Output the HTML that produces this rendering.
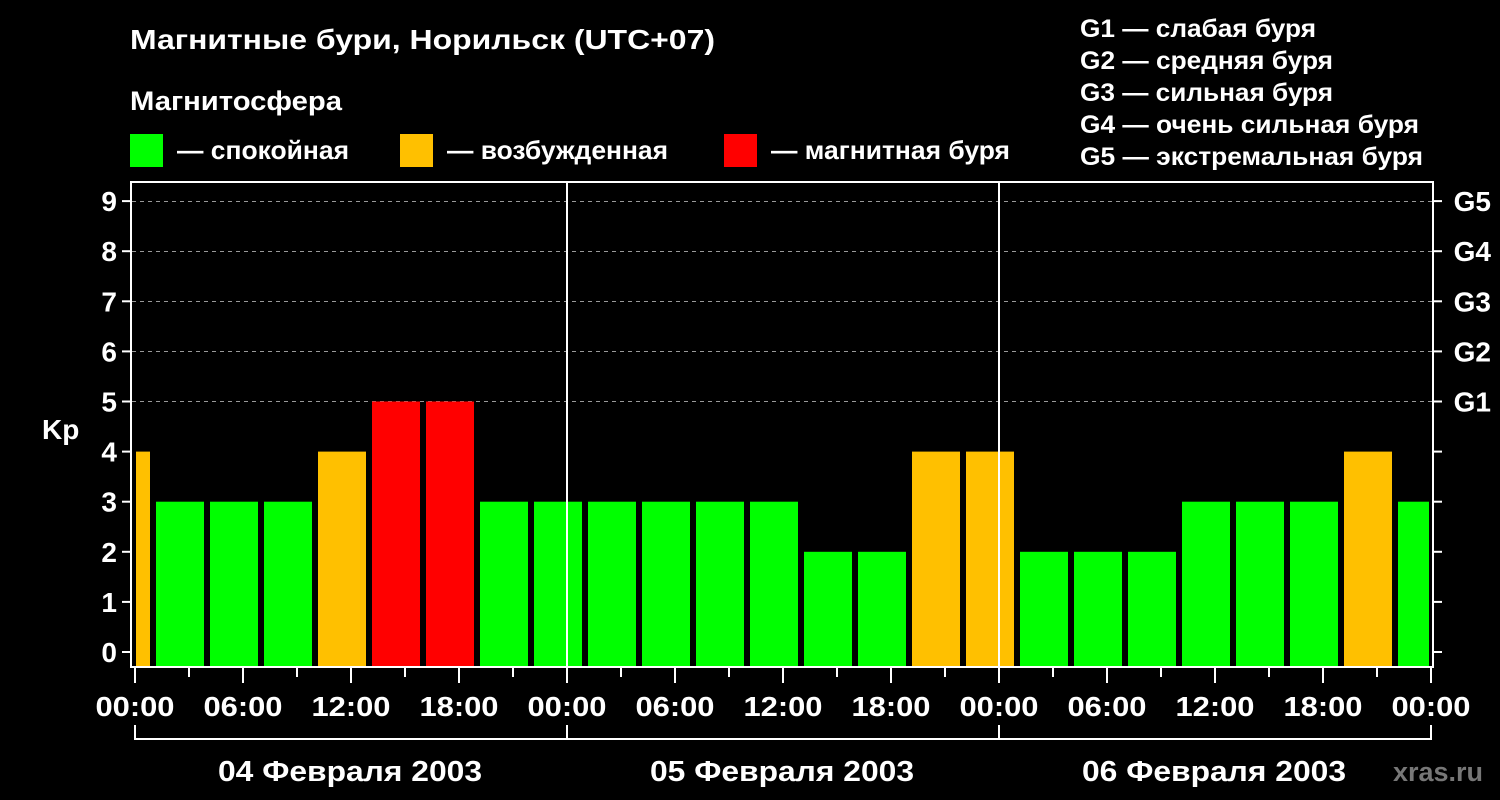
<!DOCTYPE html><html><head><meta charset="utf-8"><style>body{margin:0;background:#000}svg{display:block}text{font-family:"Liberation Sans",sans-serif;font-weight:bold;fill:#fff}</style></head><body>
<svg width="1500" height="800" viewBox="0 0 1500 800">
<rect width="1500" height="800" fill="#000"/>
<text x="130" y="49" font-size="28" textLength="585" lengthAdjust="spacingAndGlyphs">Магнитные бури, Норильск (UTC+07)</text>
<text x="130" y="110" font-size="27" textLength="212" lengthAdjust="spacingAndGlyphs">Магнитосфера</text>
<rect x="130" y="134" width="33" height="33" fill="#00ff00"/><text x="177" y="159" font-size="26" textLength="172" lengthAdjust="spacingAndGlyphs">— спокойная</text>
<rect x="400" y="134" width="33" height="33" fill="#ffc000"/><text x="447" y="159" font-size="26" textLength="221" lengthAdjust="spacingAndGlyphs">— возбужденная</text>
<rect x="724" y="134" width="33" height="33" fill="#ff0000"/><text x="771" y="159" font-size="26" textLength="239" lengthAdjust="spacingAndGlyphs">— магнитная буря</text>
<g font-size="25" lengthAdjust="spacingAndGlyphs"><text x="1080" y="37" textLength="236" lengthAdjust="spacingAndGlyphs">G1 — слабая буря</text><text x="1080" y="69" textLength="253" lengthAdjust="spacingAndGlyphs">G2 — средняя буря</text><text x="1080" y="101" textLength="253" lengthAdjust="spacingAndGlyphs">G3 — сильная буря</text><text x="1080" y="133" textLength="339" lengthAdjust="spacingAndGlyphs">G4 — очень сильная буря</text><text x="1080" y="165" textLength="343" lengthAdjust="spacingAndGlyphs">G5 — экстремальная буря</text></g>
<g stroke="#999" stroke-dasharray="4,4" stroke-width="1">
<line x1="132" y1="201.5" x2="1432" y2="201.5"/><line x1="132" y1="251.5" x2="1432" y2="251.5"/><line x1="132" y1="301.5" x2="1432" y2="301.5"/><line x1="132" y1="351.5" x2="1432" y2="351.5"/><line x1="132" y1="401.5" x2="1432" y2="401.5"/></g>
<g id="bars"></g>
<g stroke="#fff" stroke-width="2" fill="none">
<rect x="131" y="182" width="1302" height="485"/>
<line x1="567" y1="182" x2="567" y2="667"/><line x1="999" y1="182" x2="999" y2="667"/>
<path d="M135 725V739H1431V725M567 725V739M999 725V739"/>
</g>
<g stroke="#fff" stroke-width="2" id="ticks"></g>
<g font-size="28" text-anchor="end" id="yl"></g>
<text x="42" y="439" font-size="28">Kp</text>
<g font-size="28" text-anchor="middle" id="xl"></g>
<g font-size="29" text-anchor="middle"><text x="350" y="781" textLength="264" lengthAdjust="spacingAndGlyphs">04 Февраля 2003</text><text x="782" y="781" textLength="264" lengthAdjust="spacingAndGlyphs">05 Февраля 2003</text><text x="1214" y="781" textLength="264" lengthAdjust="spacingAndGlyphs">06 Февраля 2003</text></g>
<text x="1393" y="781" font-size="27" style="fill:#777" textLength="90" lengthAdjust="spacingAndGlyphs">xras.ru</text>
</svg>
<script>
var ns="http://www.w3.org/2000/svg",v=[4,3,3,3,4,5,5,3,3,3,3,3,3,2,2,4,4,2,2,2,3,3,3,4,3];
function el(p,t,a,tx){var e=document.createElementNS(ns,t);for(var k in a)e.setAttribute(k,a[k]);if(tx)e.textContent=tx;document.getElementById(p).appendChild(e);}
v.forEach(function(k,i){var x=102+54*i,x2=x+48;x=Math.max(x,136);x2=Math.min(x2,1429);var y=652-50.1*k;
el("bars","rect",{x:x,y:y,width:x2-x,height:667-y,fill:k>=5?"#ff0000":k>=4?"#ffc000":"#00ff00"});});
for(var k=0;k<=9;k++){var y=652-50.1*k;el("ticks","line",{x1:122,y1:y,x2:131,y2:y});el("ticks","line",{x1:1433,y1:y,x2:1442,y2:y});el("yl","text",{x:117,y:y+10},""+k);}
["G1","G2","G3","G4","G5"].forEach(function(g,i){el("yl","text",{x:1491,y:652-50.1*(5+i)+10},g);});
var lab=["00:00","06:00","12:00","18:00"];
for(var i=0;i<=24;i++){var x=135+54*i;var maj=i%2==0;el("ticks","line",{x1:x,y1:668,x2:x,y2:maj?683:677});
if(maj)el("xl","text",{x:x,y:716,textLength:79,lengthAdjust:"spacingAndGlyphs"},lab[(i/2)%4]);}
</script>
</body></html>
